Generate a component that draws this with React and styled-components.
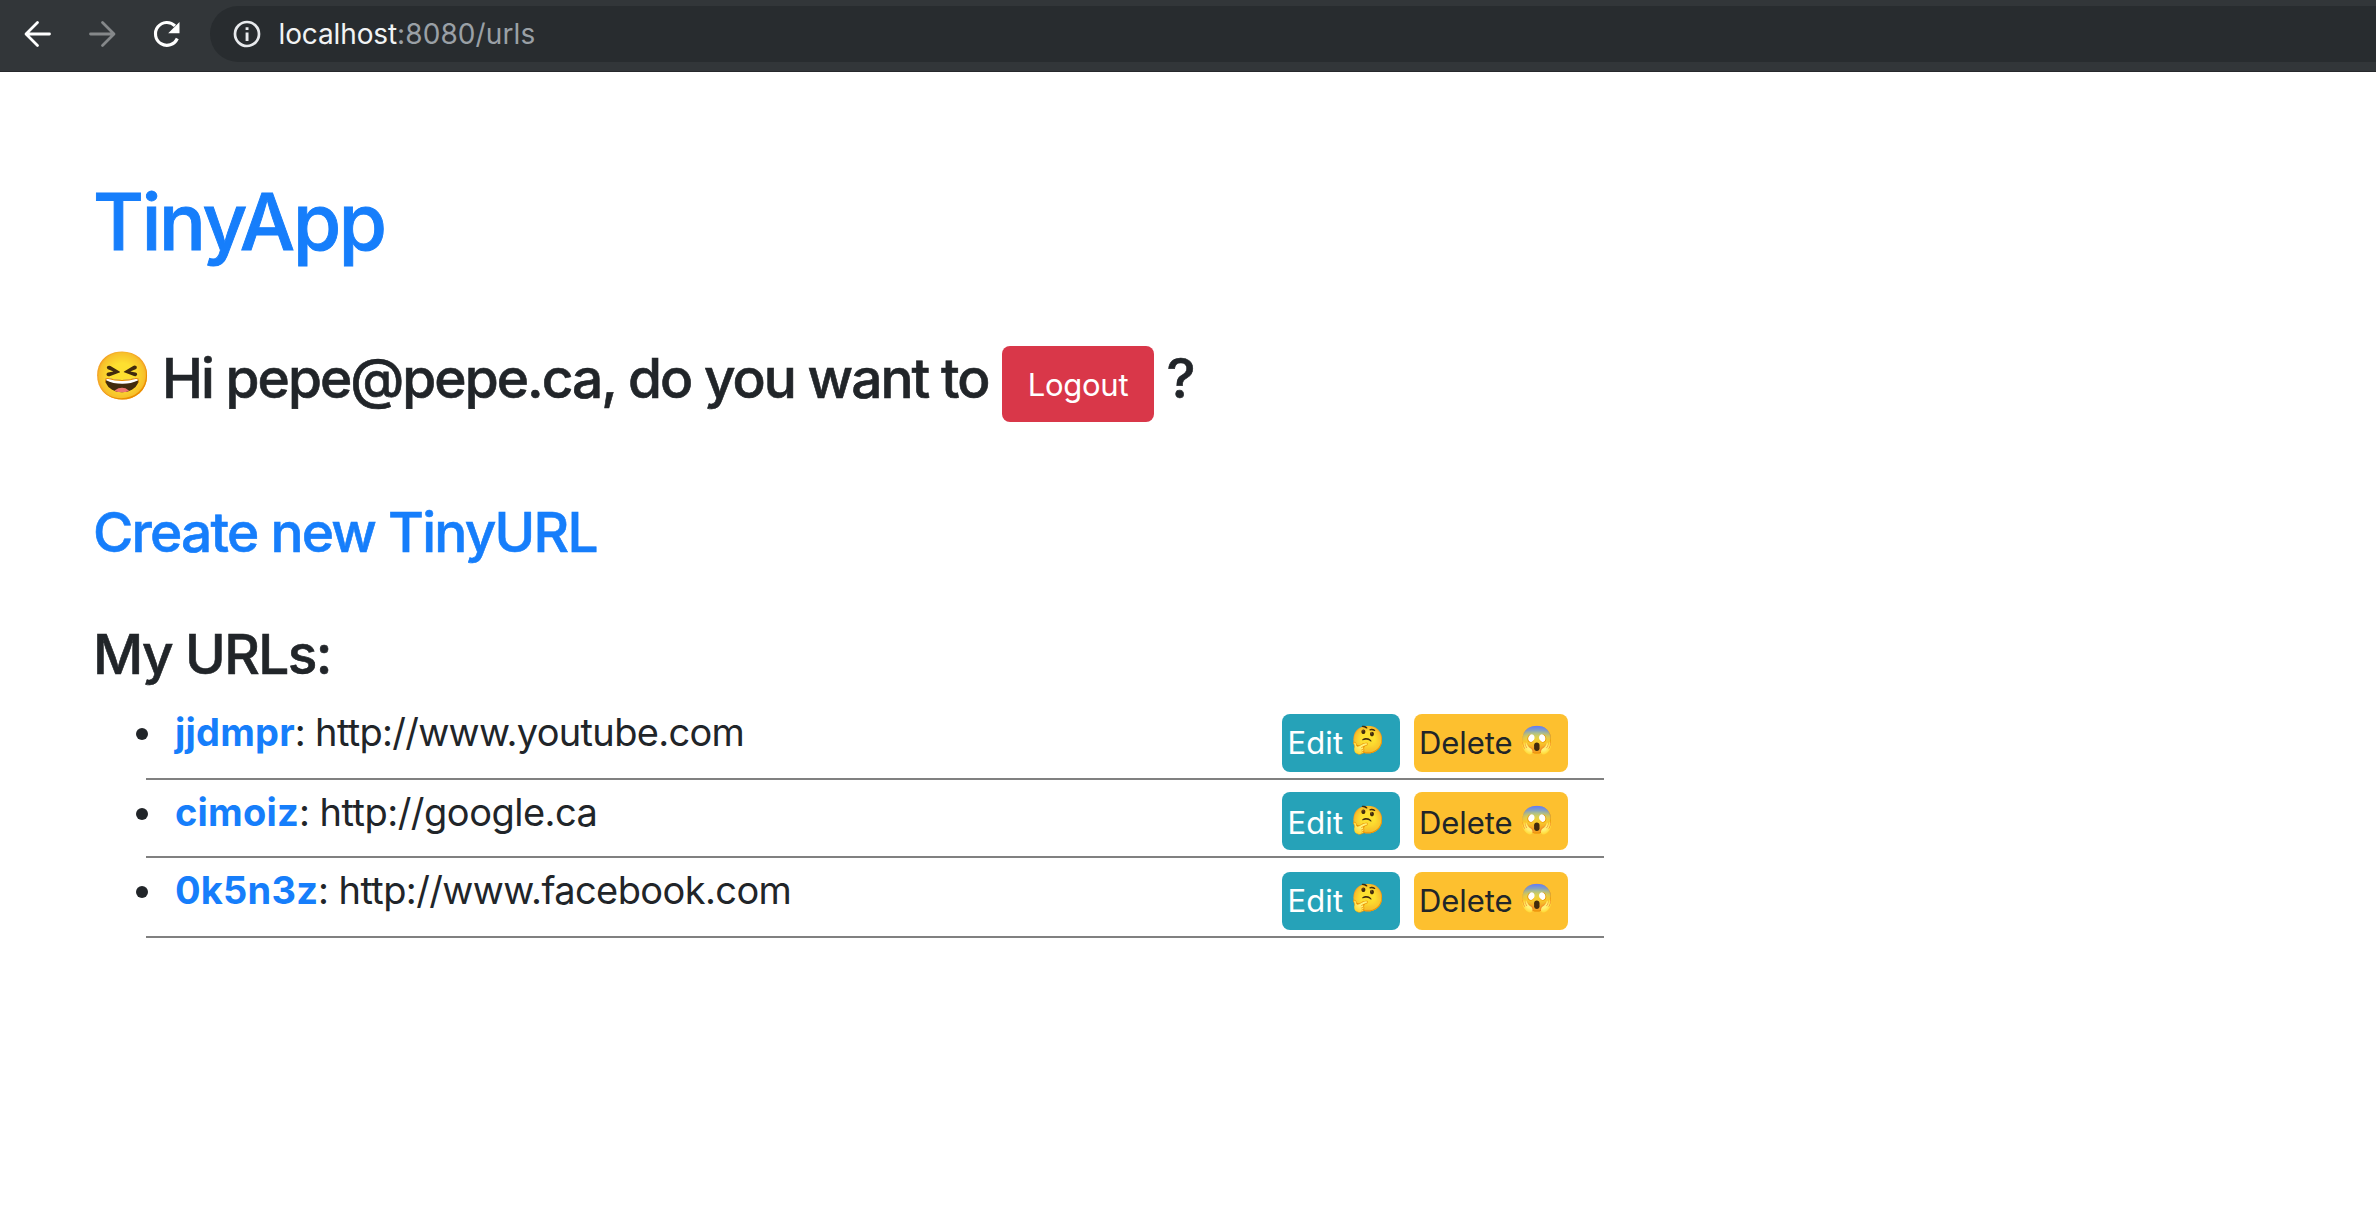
import React from 'react';
import styled, { createGlobalStyle } from 'styled-components';

const GlobalStyle = createGlobalStyle`
  * { box-sizing: border-box; }
  body {
    margin: 0;
    background: #fff;
    color: #212529;
    font-family: Inter, 'Liberation Sans', sans-serif;
  }
`;

const Toolbar = styled.header`
  display: flex;
  align-items: flex-start;
  height: 72px;
  padding-top: 6px;
  background: #323639;
  border-bottom: 1px solid #26282b;
`;

const NavButtons = styled.nav`
  display: flex;
  align-items: center;
  gap: 26px;
  width: 210px;
  height: 56px;
  padding-left: 19px;
`;

const NavButton = styled.button`
  display: flex;
  width: 38px;
  height: 38px;
  padding: 0;
  border: 0;
  background: none;
  color: ${(p) => (p.$muted ? '#85888a' : '#fff')};
`;

const AddressBar = styled.div`
  flex: 1;
  display: flex;
  align-items: center;
  height: 56px;
  padding-left: 23px;
  border-radius: 28px 0 0 28px;
  background: #282c2f;
  color: #e8eaed;
`;

const Url = styled.span`
  margin-left: 17.5px;
  color: #9aa0a6;
  font-size: 28px;
  line-height: 56px;
  letter-spacing: 0.1px;
  white-space: nowrap;
`;

const Host = styled.span`
  color: #f1f3f4;
  letter-spacing: -0.12px;
`;

const Main = styled.main`
  padding: 103px 0 0 93px;
`;

const Title = styled.h1`
  margin: 0;
  font-size: 78px;
  font-weight: 500;
  line-height: 94px;
  letter-spacing: -2.25px;
  -webkit-text-stroke: 0.9px #167efb;
`;

const Heading = styled.h2`
  margin: ${(p) => p.$top}px 0 0;
  font-size: 55px;
  font-weight: 500;
  line-height: 64px;
  letter-spacing: ${(p) => p.$tracking}px;
  -webkit-text-stroke: 0.6px ${(p) => p.$stroke || '#212529'};
`;

const Link = styled.a`
  color: #167efb;
  font-weight: ${(p) => (p.$bold ? 700 : 'inherit')};
  letter-spacing: ${(p) => (p.$bold ? '0.2px' : 'inherit')};
  text-decoration: none;
`;

const Greeting = styled.div`
  display: flex;
  height: 76px;
  margin-top: 77px;
  font-size: 55px;
  font-weight: 500;
  line-height: 64px;
  letter-spacing: -1.98px;
  white-space: pre;
`;

const GreetingText = styled.span`
  width: ${(p) => p.$width}px;
  -webkit-text-stroke: 0.6px #212529;
`;

const GreetingEmoji = styled.span`
  width: 69px;
  font-size: 47px;
  line-height: 57px;
  letter-spacing: 0;
`;

const LogoutButton = styled.button`
  width: 152px;
  height: 76px;
  margin-right: 12.5px;
  padding: 0;
  border: 0;
  border-radius: 8px;
  background: #d93749;
  color: #fff;
  font: 400 31px/77px Inter, 'Liberation Sans', sans-serif;
  letter-spacing: -0.26px;
`;

const UrlList = styled.ul`
  width: 1458px;
  margin: 14px 0 0 53px;
  padding: 0;
  list-style: none;
`;

const Row = styled.li`
  display: flex;
  height: ${(p) => (p.$compact ? 78 : 80)}px;
  border-bottom: 2px solid #808080;
`;

const Bullet = styled.span`
  flex: none;
  width: 12px;
  height: 12px;
  margin: 28px 27px 0 -10px;
  border-radius: 50%;
  background: #212529;
`;

const UrlText = styled.span`
  flex: 1;
  font-size: 38px;
  line-height: 64px;
  letter-spacing: ${(p) => p.$tracking}px;
  white-space: nowrap;
`;

const Actions = styled.div`
  display: flex;
  align-items: flex-end;
  gap: 14px;
  padding: 0 36px 6px 0;
`;

const ActionButton = styled.button`
  display: flex;
  width: ${(p) => (p.$warning ? 154 : 118)}px;
  height: 58px;
  padding: ${(p) => (p.$lower ? 2 : 0)}px 0 0 ${(p) => (p.$warning ? 5 : 5.5)}px;
  border: 0;
  border-radius: 8px;
  background: ${(p) => (p.$warning ? '#fdc02f' : '#26a2b8')};
  color: ${(p) => (p.$warning ? '#212529' : '#fff')};
  font: 400 31px/58px Inter, 'Liberation Sans', sans-serif;
  letter-spacing: ${(p) => (p.$warning ? -0.05 : 0.1)}px;
  text-align: left;
`;

const ActionLabel = styled.span`
  width: ${(p) => p.$width}px;
`;

const ActionEmoji = styled.span`
  font-size: 27px;
  line-height: 52px;
  letter-spacing: 0;
`;

const urls = [
  { id: 'jjdmpr', href: 'http://www.youtube.com', tracking: -0.7 },
  { id: 'cimoiz', href: 'http://google.ca', tracking: -0.5, compact: true },
  { id: '0k5n3z', href: 'http://www.facebook.com', tracking: -0.6 },
];

function ArrowIcon({ flip }) {
  return (
    <svg width="38" height="38" viewBox="0 0 38 38" fill="none" stroke="currentColor" strokeWidth="2.8" strokeLinecap="round" strokeLinejoin="round">
      <path d={flip ? 'M7.5 19H30M19.5 7.5L31 19L19.5 30.5' : 'M30.5 19H8M18.5 7.5L7 19L18.5 30.5'} />
    </svg>
  );
}

function ReloadIcon() {
  return (
    <svg width="38" height="38" viewBox="0 0 38 38">
      <path d="M28 10.9A11.4 11.4 0 1 0 30.3 23.5" fill="none" stroke="currentColor" strokeWidth="3.1" />
      <path d="M32.5 7V18.3H21.2Z" fill="currentColor" />
    </svg>
  );
}

function InfoIcon() {
  return (
    <svg width="28" height="28" viewBox="0 0 28 28">
      <circle cx="14" cy="14" r="12" fill="none" stroke="currentColor" strokeWidth="2.7" />
      <path d="M12.6 12.4h2.9V21h-2.9zM12.6 7.3h2.9v2.8h-2.9z" fill="currentColor" />
    </svg>
  );
}

export default function App() {
  return (
    <>
      <GlobalStyle />
      <Toolbar>
        <NavButtons>
          <NavButton aria-label="Back"><ArrowIcon /></NavButton>
          <NavButton aria-label="Forward" $muted><ArrowIcon flip /></NavButton>
          <NavButton aria-label="Reload"><ReloadIcon /></NavButton>
        </NavButtons>
        <AddressBar>
          <InfoIcon />
          <Url><Host>localhost</Host>:8080/urls</Url>
        </AddressBar>
      </Toolbar>
      <Main>
        <Title><Link>TinyApp</Link></Title>
        <Greeting>
          <GreetingEmoji>😆</GreetingEmoji>
          <GreetingText $width={840}>Hi pepe@pepe.ca, do you want to</GreetingText>
          <LogoutButton>Logout</LogoutButton>
          <GreetingText $width={30}>?</GreetingText>
        </Greeting>
        <Heading $top={78} $tracking={-1.77} $stroke="#167efb"><Link>Create new TinyURL</Link></Heading>
        <Heading $top={58} $tracking={-1.6}>My URLs:</Heading>
        <UrlList>
          {urls.map((u) => (
            <Row key={u.id} $compact={u.compact}>
              <Bullet />
              <UrlText $tracking={u.tracking}>
                <Link $bold>{u.id}</Link>: {u.href}
              </UrlText>
              <Actions>
                <ActionButton $lower={u.compact}>
                  <ActionLabel $width={63.5}>Edit</ActionLabel>
                  <ActionEmoji>🤔</ActionEmoji>
                </ActionButton>
                <ActionButton $warning $lower={u.compact}>
                  <ActionLabel $width={101}>Delete</ActionLabel>
                  <ActionEmoji>😱</ActionEmoji>
                </ActionButton>
              </Actions>
            </Row>
          ))}
        </UrlList>
      </Main>
    </>
  );
}
